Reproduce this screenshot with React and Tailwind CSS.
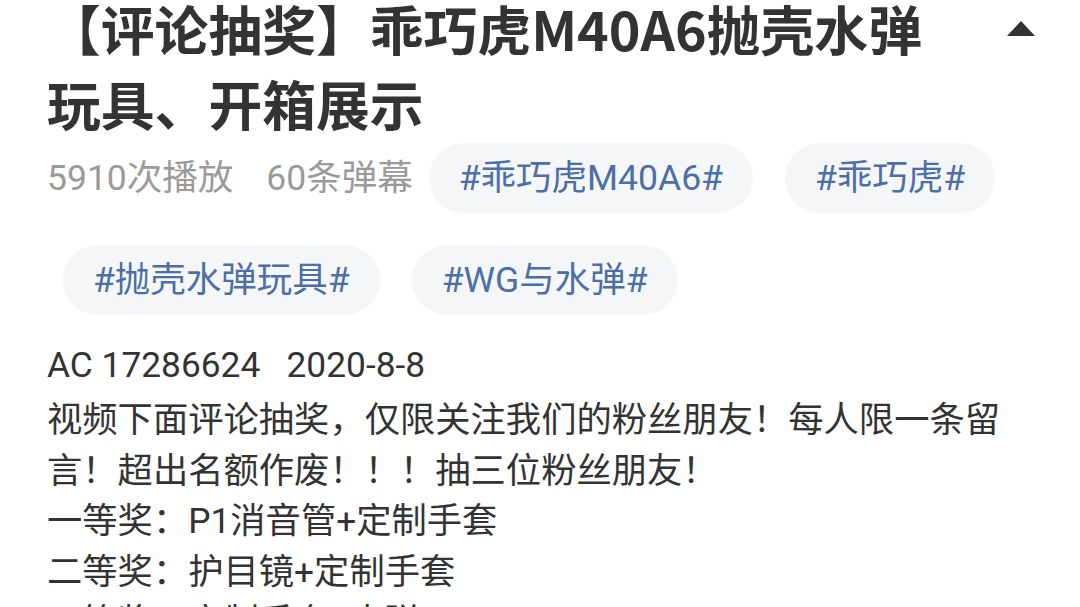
import React from "react";

const tags = [
  "#乖巧虎M40A6#",
  "#乖巧虎#",
  "#抛壳水弹玩具#",
  "#WG与水弹#",
];

function Tag({ label }) {
  return (
    <span className="mx-[16px] h-[70px] px-[30px] rounded-full bg-[#f4f6f8] text-[#4b6fa6] flex items-center text-[35.5px] leading-[36px]">
      {label}
    </span>
  );
}

export default function App() {
  return (
    <div
      className="w-[1080px] h-[607px] overflow-hidden bg-white pl-[47px] pr-[45px]"
      style={{ fontFamily: 'Roboto, "Noto Sans CJK SC", sans-serif' }}
    >
      {/* Title */}
      <div className="flex items-start -mt-[10px]">
        <h1
          className="w-[915px] text-[53.8px] leading-[75px] font-bold text-[#333333]"
          style={{ fontFamily: '"Noto Sans CJK SC", sans-serif' }}
        >
          【评论抽奖】乖巧虎M40A6抛壳水弹玩具、开箱展示
        </h1>
        <svg
          className="ml-auto mt-[31px]"
          width="28"
          height="15"
          viewBox="0 0 28 15"
        >
          <path d="M14 0 L28 15 L0 15 Z" fill="#333333" />
        </svg>
      </div>

      {/* Stats + tags */}
      <div className="mt-[3px] flex flex-wrap items-center gap-y-[32px]">
        <span className="text-[35.5px] leading-[40px] text-[#9a9a9a] mr-[33px]">
          5910次播放
        </span>
        <span className="text-[35.5px] leading-[40px] text-[#9a9a9a]">
          60条弹幕
        </span>
        {tags.map((t) => (
          <Tag key={t} label={t} />
        ))}
      </div>

      {/* Description */}
      <div className="mt-[25px] pr-[10px] text-[35.3px] text-[#333333]">
        <p className="leading-[51px]">AC 17286624&nbsp;&nbsp;&nbsp;2020-8-8</p>
        <p className="mt-[4px] leading-[50.5px]">
          视频下面评论抽奖，仅限关注我们的粉丝朋友！每人限一条留言！超出名额作废！！！抽三位粉丝朋友！
          <br />
          一等奖：P1消音管+定制手套
          <br />
          二等奖：护目镜+定制手套
          <br />
          三等奖：定制手套+水弹
        </p>
      </div>
    </div>
  );
}
